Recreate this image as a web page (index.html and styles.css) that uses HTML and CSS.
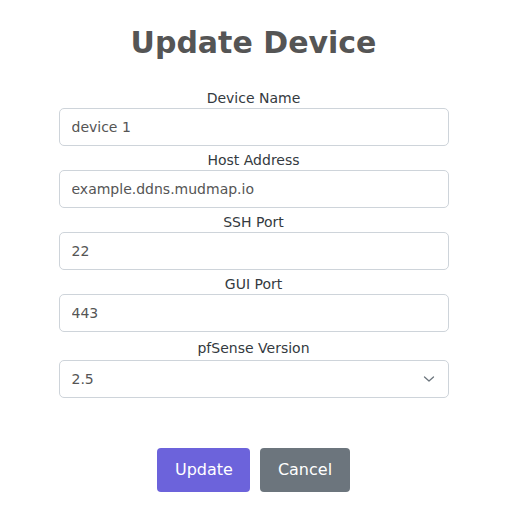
FILE: index.html
```html
<!DOCTYPE html>
<html>
<head>
<meta charset="utf-8">
<link rel="stylesheet" href="styles.css">
</head>
<body>
<div class="wrap">
  <h1 class="title">Update Device</h1>
  <form class="form">
    <label class="lbl">Device Name</label>
    <input class="field" type="text" value="device 1">
    <label class="lbl">Host Address</label>
    <input class="field" type="text" value="example.ddns.mudmap.io">
    <label class="lbl">SSH Port</label>
    <input class="field" type="text" value="22">
    <label class="lbl">GUI Port</label>
    <input class="field" type="text" value="443">
    <label class="lbl lbl-sel">pfSense Version</label>
    <div class="select">
      <span>2.5</span>
      <svg class="chev" width="12" height="8" viewBox="0 0 12 8"><path d="M1.5 2 L6 6 L10.5 2" fill="none" stroke="#6c757d" stroke-width="1.3" stroke-linecap="round" stroke-linejoin="round"/></svg>
    </div>
    <div class="actions">
      <button type="button" class="btn btn-primary">Update</button>
      <button type="button" class="btn btn-secondary">Cancel</button>
    </div>
  </form>
</div>
</body>
</html>
```
FILE: styles.css
```css
html, body { margin: 0; padding: 0; background: #fff; }
body { font-family: "DejaVu Sans", sans-serif; }
.wrap { width: 390px; margin: 0 auto; padding-top: 24px; }
.title { margin: 0; text-align: center; font-size: 30px; line-height: 38px; font-weight: bold; color: #555555; }
.form { display: flex; flex-direction: column; margin-top: 22px; }
.lbl { display: block; text-align: center; font-size: 14px; line-height: 20px; padding-top: 4px; color: #343a40; }
.lbl-sel { padding-top: 6px; padding-bottom: 2px; }
.field, .select { box-sizing: border-box; height: 38px; width: 100%; border: 1px solid #ced4da; border-radius: 5px; padding: 0 12px; font-family: "DejaVu Sans", sans-serif; font-size: 14px; color: #555555; background: #fff; margin: 0; }
.select { display: flex; align-items: center; justify-content: space-between; padding-right: 13px; }
.chev { display: block; }
.actions { display: flex; justify-content: center; gap: 10px; margin-top: 50px; }
.btn { font-family: "DejaVu Sans", sans-serif; font-size: 16px; line-height: 24px; padding: 10px 17.5px; border: none; border-radius: 4px; color: #fff; }
.btn-primary { background: #6c63db; }
.btn-secondary { background: #6c757d; }
```
